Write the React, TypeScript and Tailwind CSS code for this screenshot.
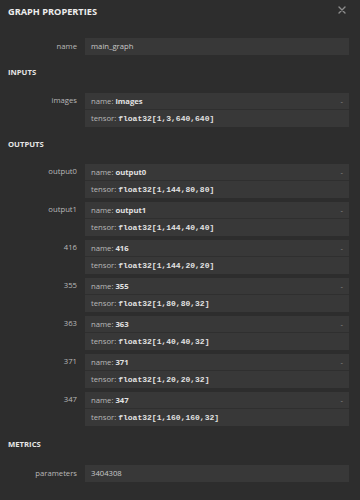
import React from "react";

type Tensor = { label: string; name: string; type: string };

const inputs: Tensor[] = [{ label: "images", name: "images", type: "float32[1,3,640,640]" }];

const outputs: Tensor[] = [
  { label: "output0", name: "output0", type: "float32[1,144,80,80]" },
  { label: "output1", name: "output1", type: "float32[1,144,40,40]" },
  { label: "416", name: "416", type: "float32[1,144,20,20]" },
  { label: "355", name: "355", type: "float32[1,80,80,32]" },
  { label: "363", name: "363", type: "float32[1,40,40,32]" },
  { label: "371", name: "371", type: "float32[1,20,20,32]" },
  { label: "347", name: "347", type: "float32[1,160,160,32]" },
];

const mono = "font-['Liberation_Mono',monospace]";

function Header({ children, top = "mt-[12px]" }: { children: React.ReactNode; top?: string }) {
  return (
    <div className={`${top} h-[12px] mb-[14px] pl-2 flex items-center text-[7.7px] font-bold text-[#e6e6e6] uppercase`}>
      {children}
    </div>
  );
}

function PlainRow({ label, value }: { label: string; value: string }) {
  return (
    <div className="flex">
      <div className="w-[77px] shrink-0 text-right h-[17px] leading-[16px] text-[#b9b9b9]">{label}</div>
      <div className="ml-2 mr-[11px] flex-1 h-[17px] leading-[17px] bg-[#383838] pl-[6px] text-[#c8c8c8]">{value}</div>
    </div>
  );
}

function TensorRow({ t }: { t: Tensor }) {
  return (
    <div className="flex">
      <div className="w-[77px] shrink-0 text-right h-[16px] leading-[15px] text-[#b9b9b9]">{t.label}</div>
      <div className="ml-2 mr-[11px] flex-1 bg-[#383838]">
        <div className="h-[17px] leading-[16px] pl-[6px] pr-[6px] flex justify-between border-b border-[#2f2f2f]">
          <span className="text-[#b9b9b9]">
            name: <b className="text-[#e2e2e2]">{t.name}</b>
          </span>
          <span className="text-[#8a8a8a]">-</span>
        </div>
        <div className="h-[17px] leading-[17px] pl-[6px] text-[#b9b9b9]">
          tensor: <b className={`${mono} text-[8px] text-[#e2e2e2]`}>{t.type}</b>
        </div>
      </div>
    </div>
  );
}

export default function App() {
  return (
    <div className="w-[360px] h-[500px] bg-[#2d2d2d] overflow-hidden font-['Open_Sans',sans-serif] text-[7.7px]">
      <div className="h-[22px] pl-2 pr-[14px] flex items-center justify-between">
        <span className="text-[9.2px] font-bold text-[#ededed] mt-[1px]">GRAPH PROPERTIES</span>
        <svg width="8" height="8" viewBox="0 0 8 8" className="-mt-[2px]">
          <path d="M1 1L7 7M7 1L1 7" stroke="#8c8c8c" strokeWidth="1.4" strokeLinecap="round" />
        </svg>
      </div>

      <div className="pt-[16px]">
        <PlainRow label="name" value="main_graph" />
      </div>

      <Header>Inputs</Header>
      {inputs.map((t) => (
        <TensorRow key={t.label} t={t} />
      ))}

      <Header>Outputs</Header>
      <div className="flex flex-col gap-[4px] -mt-[1px]">
        {outputs.map((t) => (
          <TensorRow key={t.label} t={t} />
        ))}
      </div>

      <Header top="mt-[13px]">Metrics</Header>
      <PlainRow label="parameters" value="3404308" />
    </div>
  );
}
